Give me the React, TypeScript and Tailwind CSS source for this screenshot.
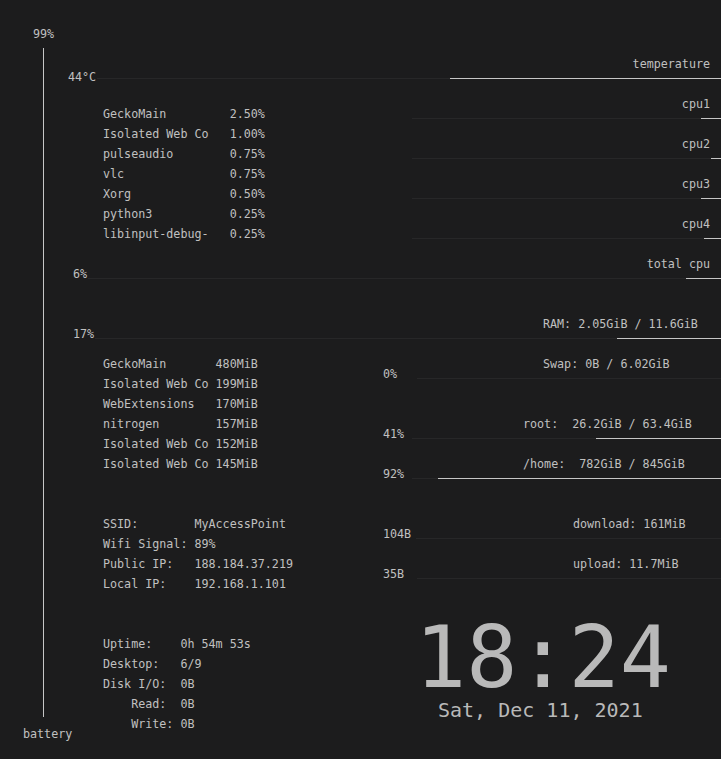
import React from 'react';

type Pair = [string, string];

const cpuProcs: Pair[] = [
  ['GeckoMain', '2.50%'],
  ['Isolated Web Co', '1.00%'],
  ['pulseaudio', '0.75%'],
  ['vlc', '0.75%'],
  ['Xorg', '0.50%'],
  ['python3', '0.25%'],
  ['libinput-debug-', '0.25%'],
];

const memProcs: Pair[] = [
  ['GeckoMain', '480MiB'],
  ['Isolated Web Co', '199MiB'],
  ['WebExtensions', '170MiB'],
  ['nitrogen', '157MiB'],
  ['Isolated Web Co', '152MiB'],
  ['Isolated Web Co', '145MiB'],
];

const network: Pair[] = [
  ['SSID:', 'MyAccessPoint'],
  ['Wifi Signal:', '89%'],
  ['Public IP:', '188.184.37.219'],
  ['Local IP:', '192.168.1.101'],
];

const system: Pair[] = [
  ['Uptime:', '0h 54m 53s'],
  ['Desktop:', '6/9'],
  ['Disk I/O:', '0B'],
  ['    Read:', '0B'],
  ['    Write:', '0B'],
];

const cpus = [
  { name: 'cpu1', fill: 20 },
  { name: 'cpu2', fill: 10 },
  { name: 'cpu3', fill: 20 },
  { name: 'cpu4', fill: 17 },
];

// faint track with the filled part on the right, like conky's bars
const Track: React.FC<{ fill: number; className?: string }> = ({ fill, className = '' }) => (
  <div className={`flex h-px flex-1 ${className}`}>
    <div className="flex-1 bg-[#272728]" />
    <div className="bg-[#c6c6c6]" style={{ width: fill }} />
  </div>
);

const Table: React.FC<{ rows: Pair[]; col: string; className?: string }> = ({ rows, col, className = '' }) => (
  <div className={`flex flex-col ${className}`}>
    {rows.map(([k, v], i) => (
      <div key={i} className="flex h-[20px] leading-[20px]">
        <span className={`shrink-0 whitespace-pre ${col}`}>{k}</span>
        <span className="whitespace-pre">{v}</span>
      </div>
    ))}
  </div>
);

// value on the left, track starting at a fixed column
const BarRow: React.FC<{ value: string; lead: string; fill: number; className?: string }> = ({
  value,
  lead,
  fill,
  className = '',
}) => (
  <div className={`flex h-[20px] ${className}`}>
    <span className={`shrink-0 leading-[20px] ${lead}`}>{value}</span>
    <Track fill={fill} className="mt-[14px]" />
  </div>
);

const App: React.FC = () => {
  return (
    <div className="flex h-[759px] w-[721px] overflow-hidden bg-[#1c1c1d] font-['DejaVu_Sans_Mono','Liberation_Mono',monospace] text-[11.7px] text-[#c0c0c0]">
      {/* battery column */}
      <div className="flex w-[60px] shrink-0 flex-col pt-[24px]">
        <div className="h-[20px] pl-[33px] leading-[20px]">99%</div>
        <div className="ml-[43px] mt-[4px] h-[669px] w-px bg-[#c6c6c6]" />
        <div className="mt-[7px] h-[20px] pl-[23px] leading-[20px]">battery</div>
      </div>

      <div className="flex flex-1 flex-col pt-[54px]">
        {/* cpu */}
        <div className="h-[20px] pr-[11px] text-right leading-[20px]">temperature</div>
        <div className="-mt-[7px] flex h-[20px]">
          <span className="w-[37px] shrink-0 pl-[8px] leading-[20px]">44°C</span>
          <Track fill={271} className="mt-[11px]" />
        </div>

        <div className="flex">
          <Table rows={cpuProcs} col="w-[18ch]" className="w-[323px] shrink-0 pl-[43px] pt-[17px]" />
          <div className="flex flex-1 flex-col pt-[7px]">
            {cpus.map((c) => (
              <div key={c.name} className="flex flex-col pb-[15px]">
                <div className="h-[20px] pr-[11px] text-right leading-[20px]">{c.name}</div>
                <div className="mt-[4px] flex pl-[29px]">
                  <Track fill={c.fill} />
                </div>
              </div>
            ))}
          </div>
        </div>

        <div className="h-[20px] pr-[11px] text-right leading-[20px]">total cpu</div>
        <BarRow value="6%" lead="w-[28px] pl-[13px]" fill={35} className="-mt-[10px]" />

        {/* memory */}
        <div className="mt-[30px] h-[20px] pl-[483px] leading-[20px] whitespace-pre">RAM: 2.05GiB / 11.6GiB</div>
        <BarRow value="17%" lead="w-[35px] pl-[13px]" fill={104} className="-mt-[10px]" />

        <div className="flex">
          <div className="flex w-[323px] shrink-0 flex-col pl-[43px] pt-[10px]">
            <Table rows={memProcs} col="w-[16ch]" />
            <Table rows={network} col="w-[13ch]" className="mt-[40px]" />
            <Table rows={system} col="w-[11ch]" className="mt-[40px]" />
          </div>

          <div className="flex flex-1 flex-col pt-[10px]">
            <div className="h-[20px] pl-[160px] leading-[20px] whitespace-pre">Swap: 0B / 6.02GiB</div>
            <BarRow value="0%" lead="w-[34px]" fill={0} className="-mt-[10px]" />

            <div className="mt-[30px] h-[20px] pl-[140px] leading-[20px] whitespace-pre">root:  26.2GiB / 63.4GiB</div>
            <BarRow value="41%" lead="w-[29px]" fill={125} className="-mt-[10px]" />

            <div className="mt-[10px] h-[20px] pl-[140px] leading-[20px] whitespace-pre">/home:  782GiB / 845GiB</div>
            <BarRow value="92%" lead="w-[29px]" fill={283} className="-mt-[10px]" />

            <div className="mt-[30px] h-[20px] pl-[190px] leading-[20px] whitespace-pre">download: 161MiB</div>
            <BarRow value="104B" lead="w-[33px]" fill={0} className="-mt-[10px]" />

            <div className="mt-[10px] h-[20px] pl-[190px] leading-[20px] whitespace-pre">upload: 11.7MiB</div>
            <BarRow value="35B" lead="w-[34px]" fill={0} className="-mt-[10px]" />

            {/* clock */}
            <div className="mt-[32px] h-[84px] pl-[32px] text-[85px] leading-[84px] text-[#b9b9b9]">18:24</div>
            <div className="h-[20px] pl-[55px] text-[20px] leading-[20px] whitespace-pre text-[#b9b9b9]">
              Sat, Dec 11, 2021
            </div>
          </div>
        </div>
      </div>
    </div>
  );
};

export default App;
